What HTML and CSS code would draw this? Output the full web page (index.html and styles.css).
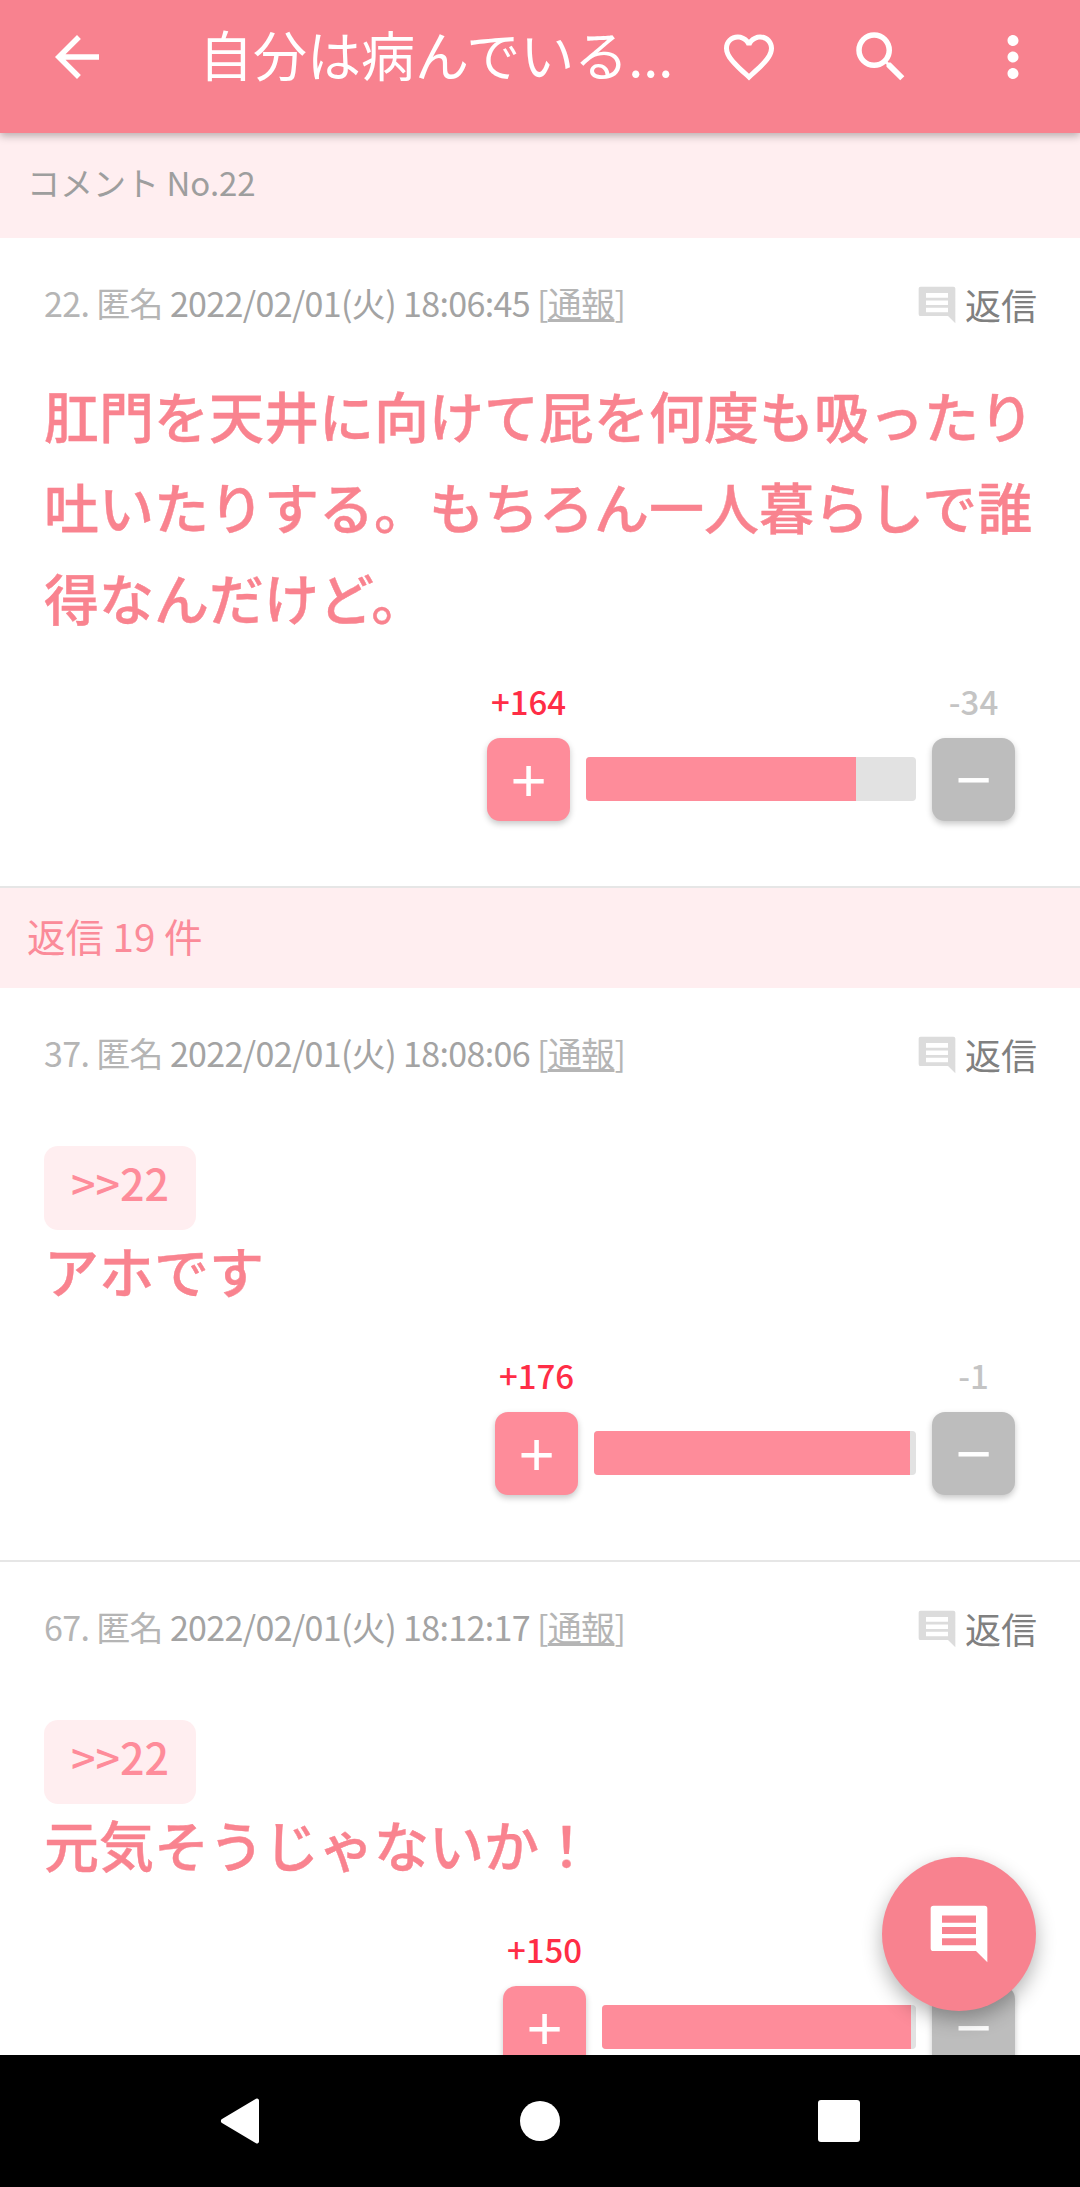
FILE: index.html
```html
<!DOCTYPE html>
<html lang="ja">
<head>
<meta charset="utf-8">
<title>コメント</title>
<link rel="stylesheet" href="styles.css">
</head>
<body>
<div class="app">
  <header class="topbar">
    <div class="topbar-row">
      <svg class="tb-icon back" viewBox="0 0 24 24"><path d="M20 11H7.830l5.590-5.590L12 4l-8 8 8 8 1.410-1.410L7.830 13H20z"/></svg>
      <div class="title">自分は病んでいる...</div>
      <svg class="tb-icon heart" viewBox="0 0 24 24"><path d="M16.500 3c-1.740 0-3.410.81-4.500 2.090C10.910 3.810 9.240 3 7.500 3 4.420 3 2 5.420 2 8.500c0 3.780 3.400 6.860 8.550 11.540L12 21.350l1.450-1.320C18.600 15.360 22 12.280 22 8.500 22 5.420 19.580 3 16.500 3zm-4.400 15.550l-.1.1-.1-.1C7.140 14.240 4 11.390 4 8.500 4 6.500 5.500 5 7.500 5c1.540 0 3.040.99 3.570 2.360h1.870C13.460 5.990 14.960 5 16.500 5c2 0 3.500 1.500 3.500 3.500 0 2.890-3.140 5.740-7.900 10.050z"/></svg>
      <svg class="tb-icon" viewBox="0 0 24 24"><path d="M15.500 14h-.79l-.28-.27A6.471 6.471 0 0 0 16 9.500 6.500 6.500 0 1 0 9.500 16c1.610 0 3.090-.59 4.230-1.570l.27.28v.79l5 4.990L20.490 19l-4.990-5zm-6 0C7.010 14 5 11.990 5 9.500S7.010 5 9.500 5 14 7.010 14 9.500 11.990 14 9.500 14z"/></svg>
      <svg class="tb-icon" viewBox="0 0 24 24"><path d="M12 8c1.100 0 2-.9 2-2s-.9-2-2-2-2 .9-2 2 .9 2 2 2zm0 2c-1.100 0-2 .9-2 2s.9 2 2 2 2-.9 2-2-.9-2-2-2zm0 6c-1.100 0-2 .9-2 2s.9 2 2 2 2-.9 2-2-.9-2-2-2z"/></svg>
    </div>
  </header>

  <main class="content">
    <div class="band band-first">コメント No.22</div>

    <article class="post post-main">
      <div class="meta">
        <div class="meta-info"><span class="soft">22. 匿名</span> 2022/02/01(火) 18:06:45 <span class="soft">[<u>通報</u>]</span></div>
        <div class="reply"><svg class="reply-icon" viewBox="0 0 24 24"><path fill-rule="evenodd" d="M3 2h18a1 1 0 0 1 1 1v19l-4-4H3a1 1 0 0 1-1-1V3a1 1 0 0 1 1-1zm3 3.500v2.500h12V5.500zm0 4v2.500h12V9.500zm0 4v2.500h12V13.500z"/></svg>返信</div>
      </div>
      <p class="body body-lead">肛門を天井に向けて屁を何度も吸ったり吐いたりする。もちろん一人暮らしで誰得なんだけど。</p>
      <div class="votes">
        <div class="vote-col"><span class="count plus">+164</span><div class="btn btn-plus"><span class="sign">+</span></div></div>
        <div class="bar" style="width:330px"><div class="fill" style="width:81.800%"></div></div>
        <div class="vote-col"><span class="count minus">-34</span><div class="btn btn-minus"><span class="sign">−</span></div></div>
      </div>
    </article>

    <div class="band band-replies">返信 19 件</div>

    <article class="post post-reply">
      <div class="meta">
        <div class="meta-info"><span class="soft">37. 匿名</span> 2022/02/01(火) 18:08:06 <span class="soft">[<u>通報</u>]</span></div>
        <div class="reply"><svg class="reply-icon" viewBox="0 0 24 24"><path fill-rule="evenodd" d="M3 2h18a1 1 0 0 1 1 1v19l-4-4H3a1 1 0 0 1-1-1V3a1 1 0 0 1 1-1zm3 3.500v2.500h12V5.500zm0 4v2.500h12V9.500zm0 4v2.500h12V13.500z"/></svg>返信</div>
      </div>
      <div class="anchor">&gt;&gt;22</div>
      <p class="body">アホです</p>
      <div class="votes">
        <div class="vote-col"><span class="count plus">+176</span><div class="btn btn-plus"><span class="sign">+</span></div></div>
        <div class="bar" style="width:322px"><div class="fill" style="width:98%"></div></div>
        <div class="vote-col"><span class="count minus">-1</span><div class="btn btn-minus"><span class="sign">−</span></div></div>
      </div>
    </article>

    <article class="post post-reply">
      <div class="meta">
        <div class="meta-info"><span class="soft">67. 匿名</span> 2022/02/01(火) 18:12:17 <span class="soft">[<u>通報</u>]</span></div>
        <div class="reply"><svg class="reply-icon" viewBox="0 0 24 24"><path fill-rule="evenodd" d="M3 2h18a1 1 0 0 1 1 1v19l-4-4H3a1 1 0 0 1-1-1V3a1 1 0 0 1 1-1zm3 3.500v2.500h12V5.500zm0 4v2.500h12V9.500zm0 4v2.500h12V13.500z"/></svg>返信</div>
      </div>
      <div class="anchor">&gt;&gt;22</div>
      <p class="body">元気そうじゃないか！</p>
      <div class="votes">
        <div class="vote-col"><span class="count plus">+150</span><div class="btn btn-plus"><span class="sign">+</span></div></div>
        <div class="bar" style="width:314px"><div class="fill" style="width:98.300%"></div></div>
        <div class="vote-col"><span class="count minus">-3</span><div class="btn btn-minus"><span class="sign">−</span></div></div>
      </div>
    </article>

    <div class="fab"><svg class="fab-icon" viewBox="0 0 24 24"><path fill-rule="evenodd" d="M3 2h18a1 1 0 0 1 1 1v19l-4-4H3a1 1 0 0 1-1-1V3a1 1 0 0 1 1-1zm3 3.500v2.500h12V5.500zm0 4v2.500h12V9.500zm0 4v2.500h12V13.500z"/></svg></div>
  </main>

  <nav class="navbar">
    <svg class="nav-icon" viewBox="0 0 48 48"><path d="M42 3.500v41a2 2 0 0 1-3 1.700L5 26a2.300 2.300 0 0 1 0-4L39 1.800a2 2 0 0 1 3 1.700z"/></svg>
    <svg class="nav-icon" viewBox="0 0 48 48"><circle cx="24" cy="24" r="20"/></svg>
    <svg class="nav-icon" viewBox="0 0 48 48"><rect x="3" y="3" width="42" height="42" rx="3"/></svg>
  </nav>
</div>
</body>
</html>
```

FILE: styles.css
```css
* { box-sizing: border-box; }
html, body { margin: 0; padding: 0; }
body {
  width: 1080px;
  height: 2187px;
  overflow: hidden;
  background: #fff;
  font-family: "Noto Sans CJK JP", "Noto Sans", sans-serif;
}
.app { display: flex; flex-direction: column; height: 2187px; }

.topbar {
  flex: none;
  height: 133px;
  background: #f8828f;
  box-shadow: 0 3px 8px rgba(0, 0, 0, .28);
  position: relative;
  z-index: 2;
}
.topbar-row {
  display: flex;
  align-items: center;
  height: 114px;
  padding: 0 34px 0 44px;
}
.tb-icon { flex: none; width: 66px; height: 66px; fill: #fff; margin-left: 66px; }
.tb-icon.back { margin-left: 0; }
.tb-icon.heart { width: 60px; height: 60px; margin-left: 0; margin-right: 3px; }
.title {
  flex: 1;
  margin-left: 89px;
  margin-top: -6px;
  color: #fff;
  font-size: 54px;
  line-height: 64px;
  white-space: nowrap;
}

.content { flex: 1; position: relative; overflow: hidden; min-height: 0; }

.band {
  display: flex;
  align-items: center;
  padding-left: 27px;
  padding-bottom: 8px;
  background: #ffeef0;
  font-size: 33px;
}
.band-first { height: 105px; color: #9e9e9e; }
.band-replies { height: 100px; color: #fb8b99; font-size: 38.500px; padding-bottom: 7px; }

.post { padding: 0 44px; }
.post-main { height: 650px; border-bottom: 2px solid #e6e6e6; padding-top: 42px; }
.post-reply { height: 574px; border-bottom: 2px solid #e6e6e6; padding-top: 42px; }

.meta { display: flex; justify-content: space-between; align-items: center; height: 44px; }
.meta-info { font-size: 34px; color: #a3a3a3; letter-spacing: -.65px; white-space: nowrap; }
.soft { color: #b5b5b5; }
.reply { display: flex; align-items: center; color: #808080; font-size: 36px; margin: 3px -1px 0 0; }
.reply-icon { width: 44px; height: 44px; fill: #dcdcdc; margin: 2px 6px 0 0; }

.body {
  margin: -6px 0 0;
  color: #f9838f;
  font-size: 55px;
  line-height: 91px;
  font-weight: 500;
  -webkit-text-stroke: .4px #f9838f;
}
.body-lead { margin-top: 45px; }

.anchor {
  width: 152px;
  height: 84px;
  margin-top: 72px;
  border-radius: 14px;
  background: #ffeef0;
  color: #fe8c9a;
  font-size: 43px;
  font-weight: 500;
  line-height: 72px;
  text-align: center;
}

.votes { display: flex; align-items: flex-end; justify-content: flex-end; gap: 16px; padding-right: 21px; }
.post-main .votes { margin-top: 37px; }
.post-reply .votes { margin-top: 38px; }
.vote-col { display: flex; flex-direction: column; align-items: center; gap: 15px; }
.count { font-size: 33px; line-height: 44px; font-weight: 500; }
.plus { color: #ff2d46; }
.minus { color: #c4c4c4; }
.btn {
  width: 83px;
  height: 83px;
  border-radius: 13px;
  box-shadow: 0 3px 6px rgba(0, 0, 0, .22);
  display: flex;
  align-items: center;
  justify-content: center;
  color: #fff;
}
.sign { font-family: "Liberation Sans", sans-serif; font-size: 62px; line-height: 1; }
.btn-plus { background: #fe8c9a; }
.btn-minus { background: #bdbdbd; }
.bar {
  height: 44px;
  margin-bottom: 20px;
  background: #e2e2e2;
  border-radius: 4px;
  overflow: hidden;
}
.fill { height: 100%; background: #fe8c9a; }

.fab {
  position: absolute;
  right: 44px;
  bottom: 44px;
  width: 154px;
  height: 154px;
  border-radius: 50%;
  background: #f8828f;
  box-shadow: 0 8px 20px rgba(0, 0, 0, .3);
  display: flex;
  align-items: center;
  justify-content: center;
}
.fab-icon { width: 68px; height: 68px; fill: #fff; }

.navbar {
  flex: none;
  height: 132px;
  background: #000;
  position: relative;
  z-index: 2;
  display: flex;
  align-items: center;
  justify-content: center;
  gap: 251px;
}
.nav-icon { width: 48px; height: 48px; fill: #fff; }
```
